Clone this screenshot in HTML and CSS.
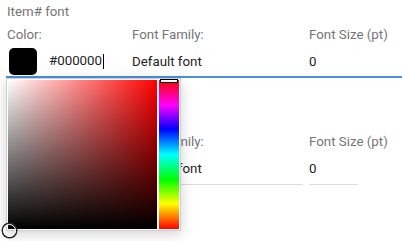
FILE: index.html
```html
<!DOCTYPE html>
<html lang="en">
<head>
  <meta charset="UTF-8">
  <title>Item font</title>
  <link rel="stylesheet" href="styles.css">
</head>
<body>
  <div class="item">
    <div class="heading">Item# font</div>
    <div class="grid active">
      <div class="label">Color:</div>
      <div class="label">Font Family:</div>
      <div class="label">Font Size (pt)</div>
      <div class="value color-field">
        <span class="swatch"></span>
        <span class="hex">#000000<span class="caret"></span></span>
      </div>
      <div class="value">Default font</div>
      <div class="value">0</div>
    </div>

    <div class="picker">
      <div class="sat">
        <span class="sat-handle"></span>
      </div>
      <div class="hue">
        <span class="hue-handle"></span>
      </div>
    </div>
  </div>

  <div class="item second">
    <div class="heading">Item# font</div>
    <div class="grid">
      <div class="label">Color:</div>
      <div class="label">Font Family:</div>
      <div class="label">Font Size (pt)</div>
      <div class="value color-field">
        <span class="swatch"></span>
        <span class="hex">#000000</span>
      </div>
      <div class="value line">Default font</div>
      <div class="value line">0</div>
    </div>
  </div>
</body>
</html>
```

FILE: styles.css
```css
body {
  margin: 0;
  padding: 4px 0 60px 7px;
  font-family: Roboto, "Liberation Sans", sans-serif;
  font-size: 13.3px;
  color: #222;
  background: #fff;
}
.item {
  position: relative;
}
.second {
  margin-top: 33px;
}
.heading {
  line-height: 16px;
  color: #757575;
}
.grid {
  display: grid;
  grid-template-columns: 119px 171px 49px;
  column-gap: 6px;
  margin-top: 7px;
  white-space: nowrap;
}
.grid.active {
  border-bottom: 2px solid #4a90e2;
  margin-left: -1px;
  padding-left: 1px;
  padding-bottom: 1px;
}
.label {
  line-height: 16px;
  color: #757575;
  margin-bottom: 4px;
}
.value {
  height: 28px;
  line-height: 30px;
}
.value.line {
  border-bottom: 1px solid #ddd;
  padding-bottom: 2px;
}
.color-field {
  display: flex;
  align-items: center;
  gap: 12px;
}
.swatch {
  width: 28px;
  height: 27px;
  margin-left: 2px;
  background: #000;
  border-radius: 5px;
}
.hex {
  position: relative;
  line-height: 30px;
}
.caret {
  position: absolute;
  right: -2px;
  top: 8px;
  width: 1px;
  height: 15px;
  background: #000;
}

/* colour picker popup */
.picker {
  position: absolute;
  left: -1px;
  top: 74px;
  z-index: 2;
  display: flex;
  gap: 2px;
  padding: 1px;
  background: #fff;
  border: 1px solid #d0d0d0;
  box-shadow: 0 3px 12px rgba(0,0,0,0.18);
}
.sat {
  position: relative;
  width: 149px;
  height: 149px;
  background: linear-gradient(to top, #000, rgba(0,0,0,0)),
              linear-gradient(to right, #fff, #f00);
}
.sat-handle {
  position: absolute;
  left: -5px;
  bottom: -8px;
  width: 11px;
  height: 11px;
  border-radius: 50%;
  border: 1.5px solid #fff;
  box-shadow: 0 0 0 1.5px #222;
}
.hue {
  position: relative;
  width: 20px;
  height: 149px;
  background: linear-gradient(to bottom, #f00 0%, #f0f 17%, #00f 33%, #0ff 50%, #0f0 67%, #ff0 83%, #f00 100%);
}
.hue-handle {
  position: absolute;
  left: 1px;
  right: 1px;
  top: -1px;
  height: 2px;
  background: #fff;
  border: 1px solid #000;
}
```
